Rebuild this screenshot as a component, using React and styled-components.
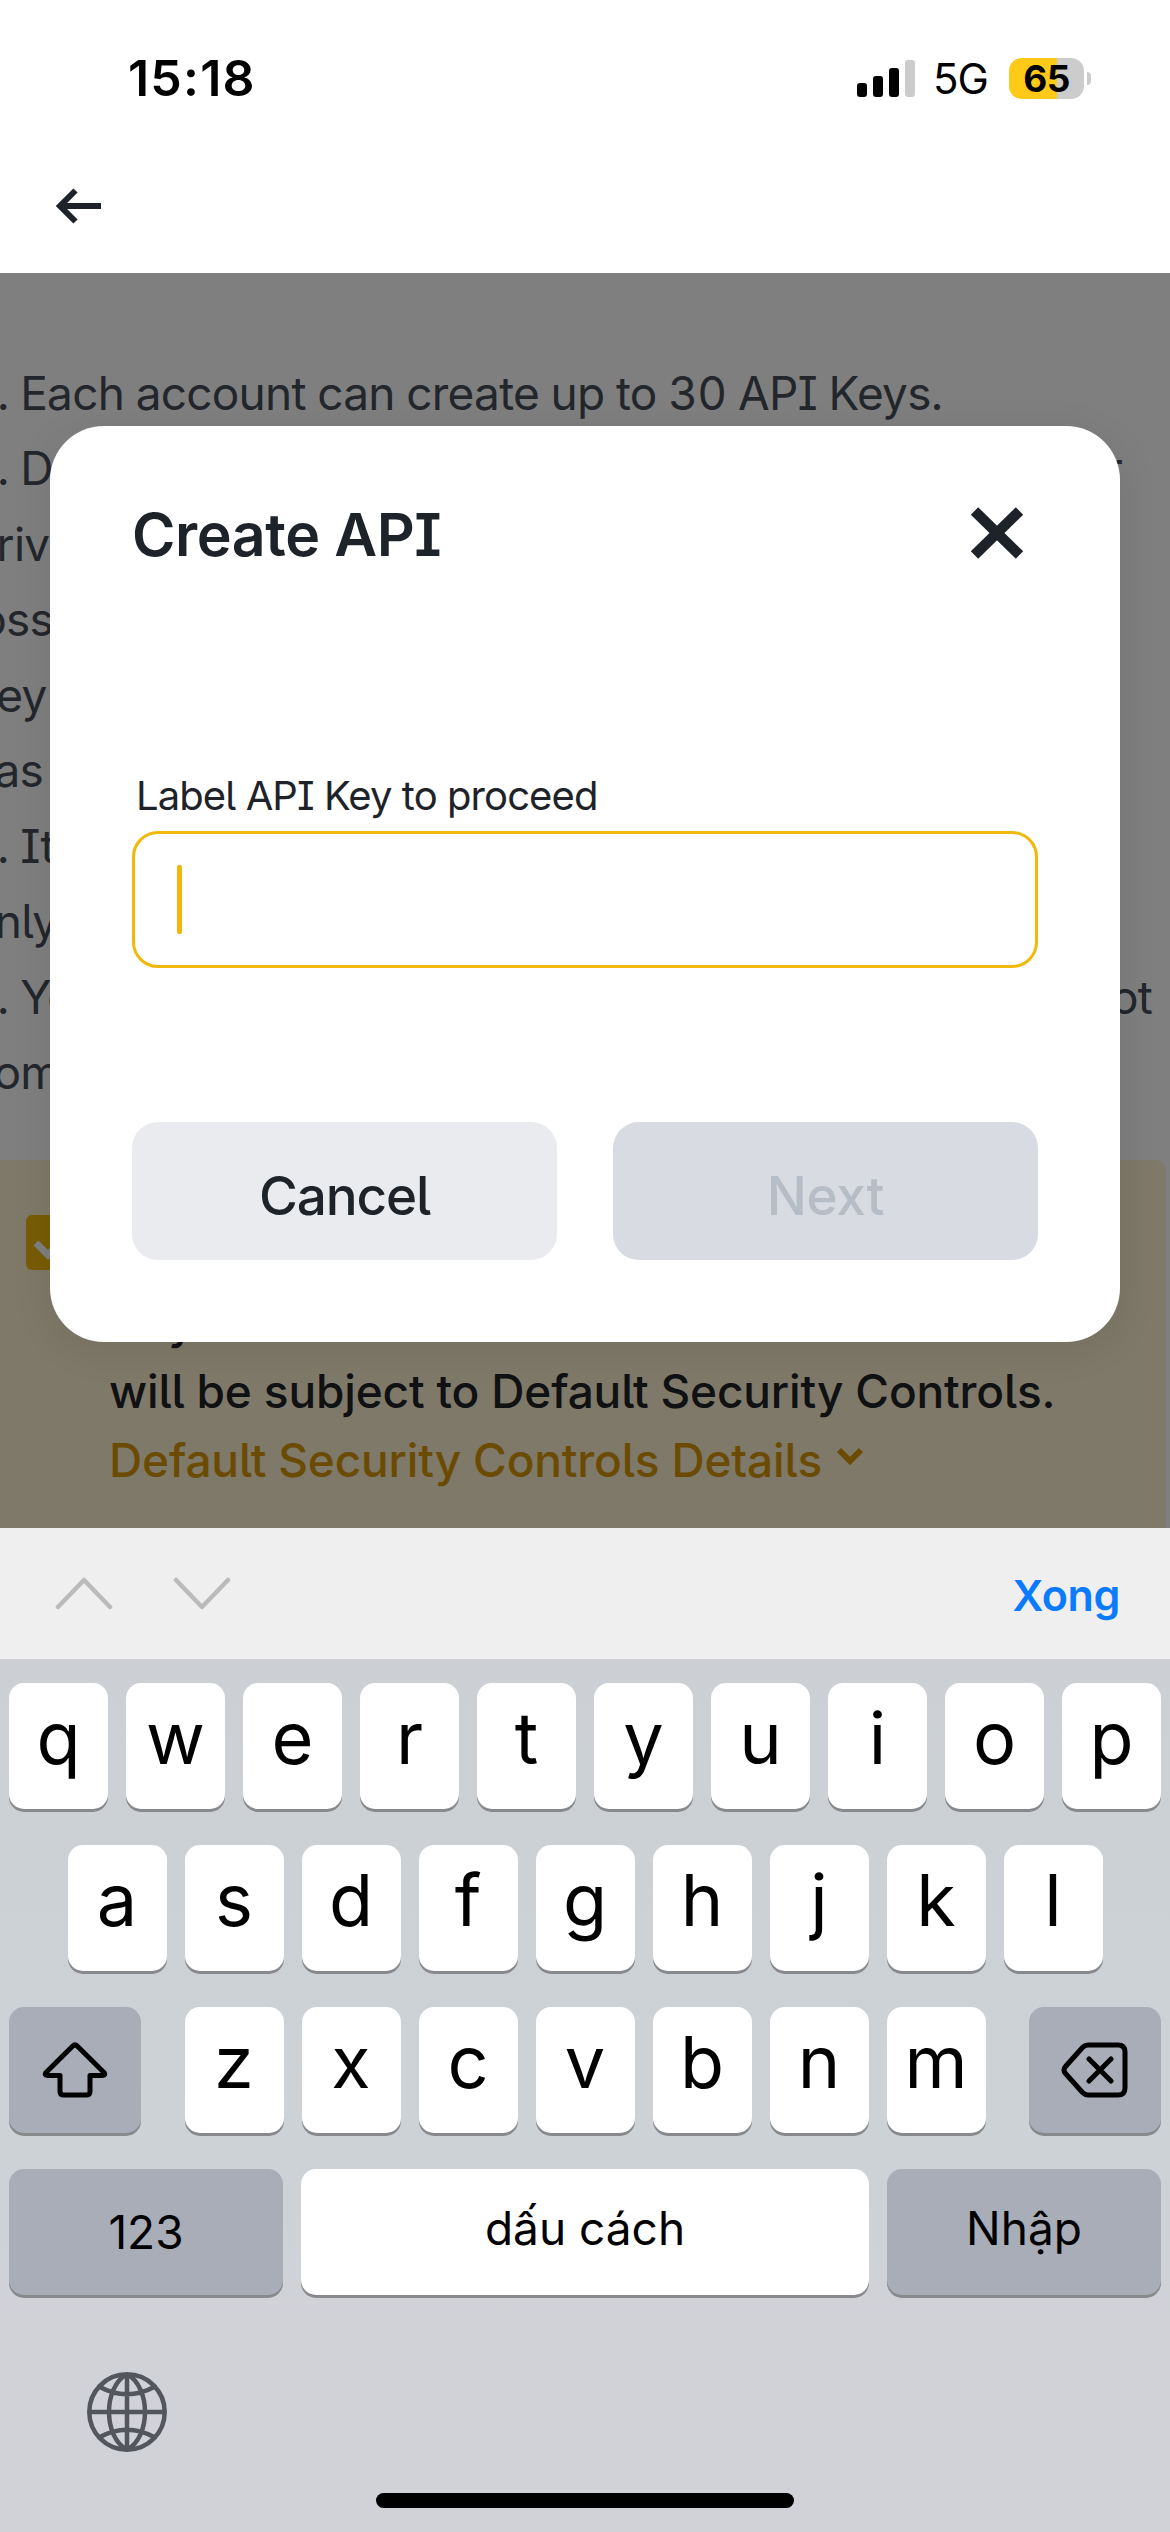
import React from "react";
import styled, { createGlobalStyle } from "styled-components";

const Global = createGlobalStyle`
  *, *::before, *::after { box-sizing: border-box; }
  body { margin: 0; background: #fff; }
  button { border: 0; padding: 0; font: inherit; background: none; }
  svg { display: block; flex: none; }
`;

const Screen = styled.main`
  width: 1170px;
  height: 2532px;
  display: flex;
  flex-direction: column;
  overflow: hidden;
  background: #fff;
  font-family: Inter, "Liberation Sans", sans-serif;
  color: #000;
  white-space: nowrap;
`;

const StatusBar = styled.div`
  height: 156px;
  padding: 0 79px 0 128px;
  display: flex;
  justify-content: space-between;
  align-items: center;
`;

const Clock = styled.span`
  font-size: 50px;
  font-weight: 600;
  line-height: 60px;
  letter-spacing: 1.2px;
`;

const StatusIcons = styled.div`
  display: flex;
  align-items: center;
`;

const Bars = styled.div`
  display: flex;
  align-items: flex-end;
  gap: 6px;
  height: 37px;
  margin-right: 18px;
`;

const Bar = styled.i`
  width: 10px;
  height: ${(p) => p.$h}px;
  border-radius: 3px;
  background: ${(p) => (p.$off ? "#cccccc" : "#000")};
`;

const Network = styled.span`
  width: 55px;
  font-size: 42px;
  font-weight: 400;
  line-height: 46px;
  letter-spacing: -1px;
  margin-right: 21px;
  padding-top: 2px;
`;

const Battery = styled.div`
  width: 75px;
  height: 41px;
  border-radius: 13px;
  background: linear-gradient(90deg, #ffc917 64%, #cccccc 64%);
  display: flex;
  align-items: center;
  justify-content: center;
  font-size: 37px;
  font-weight: 700;
  letter-spacing: -0.5px;
`;

const BatteryTip = styled.i`
  width: 4px;
  height: 13px;
  margin-left: 3px;
  border-radius: 0 5px 5px 0;
  background: #cccccc;
`;

const NavBar = styled.nav`
  height: 117px;
  padding: 31px 0 0 54px;
`;

const Content = styled.section`
  position: relative;
  height: 1254.5px;
  overflow: hidden;
  padding-top: 82.5px;
  font-feature-settings: "cv05", "cv08";
`;

const Notes = styled.div`
  margin-left: -32px;
  width: 1184px;
  color: #474d57;
  font-size: 46px;
  line-height: 75.5px;
  font-feature-settings: "cv05", "cv08", "tnum";
`;

const NoteLine = styled.div`
  height: 75.5px;
  display: flex;
  justify-content: space-between;
  letter-spacing: -0.77px;
`;

const NoteEnd = styled.span`
  margin-right: ${(p) => p.$inset || 0}px;
`;

const Banner = styled.div`
  display: flex;
  width: 1166px;
  height: 368px;
  margin-top: 49.5px;
  border-radius: 0 10px 0 0;
  background: #fef2d3;
  padding: 55px 0 0 26px;
`;

const Checkbox = styled.div`
  width: 55px;
  height: 55px;
  border-radius: 6px;
  background: #f0b90b;
  margin-right: 28px;
`;

const BannerText = styled.div`
  padding-top: 73px;
  font-size: 46px;
  font-weight: 500;
  line-height: 69px;
  letter-spacing: -0.16px;
  color: #202226;
`;

const BannerLine = styled.div``;

const DetailsLink = styled.div`
  display: flex;
  align-items: center;
  color: #d69704;

  svg { margin: -8px 0 0 14px; }
`;

const Overlay = styled.div`
  position: absolute;
  inset: 0;
  background: rgba(0, 0, 0, 0.5);
  padding: 153px 50px 0;
`;

const Dialog = styled.div`
  height: 916px;
  border-radius: 54px;
  background: #fff;
  box-shadow: 0 8px 40px rgba(0, 0, 0, 0.09);
  padding: 71px 82px 0;
  color: #1e2329;
`;

const DialogHeader = styled.div`
  display: flex;
  justify-content: space-between;
  align-items: center;
  height: 76px;
  padding: 0 14px 0 0;

  svg { margin-top: -5px; }
`;

const Title = styled.h1`
  margin: 0;
  font-size: 59px;
  font-weight: 600;
  line-height: 76px;
  letter-spacing: -0.4px;
`;

const FieldLabel = styled.label`
  display: block;
  margin: 198px 0 0 4px;
  font-size: 40px;
  line-height: 50px;
  letter-spacing: -0.92px;
`;

const Field = styled.div`
  height: 137px;
  margin-top: 10px;
  border: 3px solid #f0b90b;
  border-radius: 26px;
  display: flex;
  align-items: center;
  padding-left: 42px;
`;

const Caret = styled.i`
  width: 5px;
  height: 69px;
  border-radius: 2px;
  background: #f3b60a;
`;

const Actions = styled.div`
  display: flex;
  gap: 56px;
  margin-top: 154px;
`;

const Action = styled.button`
  flex: 1;
  height: 138px;
  padding-top: 10px;
  border-radius: 26px;
  background: ${(p) => (p.$muted ? "#d8dbe1" : "#eaebef")};
  color: ${(p) => (p.$muted ? "#b7bdc6" : "#1e2329")};
  font-size: 53px;
  font-weight: 500;
  letter-spacing: ${(p) => p.$track}px;
`;

const Accessory = styled.div`
  height: 131.5px;
  background: #efefef;
  display: flex;
  align-items: center;
  padding: 0 50px 0 55px;
`;

const FieldArrows = styled.div`
  display: flex;
  gap: 60px;
`;

const Done = styled.span`
  margin-left: auto;
  padding-top: 3px;
  color: #0a7aff;
  font-size: 43px;
  font-weight: 600;
  line-height: 54px;
  letter-spacing: -0.4px;
`;

const Keyboard = styled.section`
  flex: 1;
  display: flex;
  flex-direction: column;
  padding: 24px 9px 0;
  background: linear-gradient(#ccd0d5, #cdd2d6 55%, #d0d2d8 75%);
`;

const KeyRow = styled.div`
  display: flex;
  justify-content: ${(p) => (p.$spread ? "space-between" : "center")};
  gap: 18px;
  height: 126px;
  margin-bottom: 36px;
`;

const KeyGroup = styled.div`
  display: flex;
  gap: 18px;
`;

const Key = styled.button`
  width: ${(p) => p.$w || 99}px;
  height: 126px;
  border-radius: 15px;
  background: ${(p) => (p.$dark ? "#a8adb8" : "#fff")};
  box-shadow: 0 3px 0 #87898d;
  display: flex;
  align-items: center;
  justify-content: center;
  color: #000;
  font-size: ${(p) => (p.$label ? 46 : 72)}px;
  font-weight: ${(p) => (p.$label ? 400 : 380)};
  line-height: 1;
  padding-bottom: ${(p) => p.$lift || 0}px;
`;

const KeyboardFooter = styled.div`
  height: 80px;
  margin-top: 41px;
  padding-left: 78px;
`;

const HomeBar = styled.div`
  width: 418px;
  height: 15px;
  margin: 41px auto 0;
  border-radius: 8px;
  background: #000;
`;

const Stroke = ({ w, h, d, color = "#000", width = 5, cap = "round", join = "round" }) => (
  <svg width={w} height={h} viewBox={`0 0 ${w} ${h}`} fill="none" stroke={color}
    strokeWidth={width} strokeLinecap={cap} strokeLinejoin={join}>
    <path d={d} />
  </svg>
);

const NOTES = [
  ["1. Each account can create up to 30 API Keys."],
  ["2. Do", "r", 30],
  ["Priv"],
  ["loss"],
  ["Key"],
  ["has"],
  ["3. It"],
  ["only"],
  ["4. Yo", "ot", 0],
  ["com"],
];

const letters = (s) => s.split("").map((c) => <Key key={c} $lift={16}>{c}</Key>);

export default function App() {
  return (
    <Screen>
      <Global />
      <StatusBar>
        <Clock>15:18</Clock>
        <StatusIcons>
          <Bars><Bar $h={14} /><Bar $h={21} /><Bar $h={29} /><Bar $h={37} $off /></Bars>
          <Network>5G</Network>
          <Battery>65</Battery>
          <BatteryTip />
        </StatusIcons>
      </StatusBar>
      <NavBar>
        <Stroke w={50} h={38} d="M47 19H7M21.5 3.500L6 19L21.500 34.500" color="#1e2329" width={6} cap="butt" join="miter" />
      </NavBar>

      <Content>
        <Notes>
          {NOTES.map(([start, end, inset]) => (
            <NoteLine key={start}>
              <span>{start}</span>
              {end && <NoteEnd $inset={inset}>{end}</NoteEnd>}
            </NoteLine>
          ))}
        </Notes>
        <Banner>
          <Checkbox>
            <Stroke w={55} h={55} d="M10 28L22 40L45 16" color="#fff" width={7} cap="butt" join="miter" />
          </Checkbox>
          <BannerText>
            <BannerLine>Any</BannerLine>
            <BannerLine>will be subject to Default Security Controls.</BannerLine>
            <DetailsLink>
              Default Security Controls Details
              <Stroke w={28} h={20} d="M3 3L14 14L25 3" color="#d69704" width={6} cap="butt" join="miter" />
            </DetailsLink>
          </BannerText>
        </Banner>

        <Overlay>
          <Dialog>
            <DialogHeader>
              <Title>Create API</Title>
              <Stroke w={54} h={52} d="M4.500 4L49.500 48M49.500 4L4.500 48" color="#1e2329" width={10.5} cap="butt" />
            </DialogHeader>
            <FieldLabel>Label API Key to proceed</FieldLabel>
            <Field><Caret /></Field>
            <Actions>
              <Action $track={-1.1}>Cancel</Action>
              <Action $muted $track={-0.3}>Next</Action>
            </Actions>
          </Dialog>
        </Overlay>
      </Content>

      <Accessory>
        <FieldArrows>
          <Stroke w={58} h={34} d="M3 31L29 4L55 31" color="#bbbbbb" width={4.5} />
          <Stroke w={58} h={34} d="M3 4L29 31L55 4" color="#bbbbbb" width={4.5} />
        </FieldArrows>
        <Done>Xong</Done>
      </Accessory>

      <Keyboard>
        <KeyRow>{letters("qwertyuiop")}</KeyRow>
        <KeyRow>{letters("asdfghjkl")}</KeyRow>
        <KeyRow $spread>
          <Key $w={132} $dark>
            <Stroke w={66} h={56} d="M30.500 4.200Q33 1.800 35.500 4.200L62 30.500Q64 33.500 60.500 33.500H48V49.500Q48 53 44.500 53H21.500Q18 53 18 49.500V33.500H5.500Q2 33.500 4 30.500Z" />
          </Key>
          <KeyGroup>{letters("zxcvbnm")}</KeyGroup>
          <Key $w={132} $dark>
            <Stroke w={68} h={56} d="M27 3H57Q64 3 64 10V46Q64 53 57 53H27Q24 53 21.500 50.500L4.500 31.500Q1.500 28 4.500 24.500L21.500 5.500Q24 3 27 3ZM28 17L50 39M50 17L28 39" />
          </Key>
        </KeyRow>
        <KeyRow>
          <Key $w={274} $dark $label>123</Key>
          <Key $w={568} $label $lift={9}>dấu cách</Key>
          <Key $w={274} $dark $label $lift={9}>Nhập</Key>
        </KeyRow>
        <KeyboardFooter>
          <Stroke w={80} h={80} color="#53565c" width={4.5}
            d="M40 2.300A37.700 37.700 0 1 0 40 77.700A37.700 37.700 0 1 0 40 2.300ZM40 2.300V77.700M2.300 40H77.700M40 2.300C16 15 16 65 40 77.700M40 2.300C64 15 64 65 40 77.700M12 14.500Q40 30 68 14.500M12 65.500Q40 50 68 65.500" />
        </KeyboardFooter>
        <HomeBar />
      </Keyboard>
    </Screen>
  );
}
